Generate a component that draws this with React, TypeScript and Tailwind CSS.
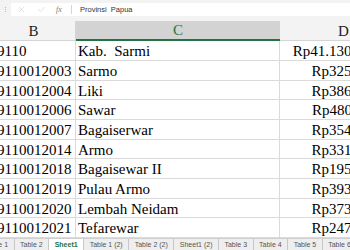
import React from "react";
import { X, Check } from "lucide-react";

const rows: { code: string; name: string; amount: string; h: string }[] = [
  { code: "9110", name: "Kab.  Sarmi", amount: "Rp41.130.512.000", h: "h-[20px]" },
  { code: "9110012003", name: "Sarmo", amount: "Rp325.416.000", h: "h-[20px]" },
  { code: "9110012004", name: "Liki", amount: "Rp386.204.000", h: "h-[19px]" },
  { code: "9110012006", name: "Sawar", amount: "Rp480.118.000", h: "h-[20px]" },
  { code: "9110012007", name: "Bagaiserwar", amount: "Rp354.902.000", h: "h-[20px]" },
  { code: "9110012014", name: "Armo", amount: "Rp331.057.000", h: "h-[19px]" },
  { code: "9110012018", name: "Bagaisewar II", amount: "Rp195.640.000", h: "h-[20px]" },
  { code: "9110012019", name: "Pulau Armo", amount: "Rp393.281.000", h: "h-[20px]" },
  { code: "9110012020", name: "Lembah Neidam", amount: "Rp373.765.000", h: "h-[19px]" },
  { code: "9110012021", name: "Tefarewar", amount: "Rp247.330.000", h: "h-[20px]" },
];

const tabs = [
  "Table 1",
  "Table 2",
  "Sheet1",
  "Table 1 (2)",
  "Table 2 (2)",
  "Sheet1 (2)",
  "Table 3",
  "Table 4",
  "Table 5",
  "Table 6",
];

const serif = { fontFamily: '"Liberation Serif", "Times New Roman", serif' };

export default function App() {
  return (
    <div
      className="relative w-[350px] h-[250px] overflow-hidden bg-white flex flex-col"
      style={{ fontFamily: '"Liberation Sans", Arial, sans-serif' }}
    >
      {/* formula bar */}
      <div className="h-[21px] shrink-0 bg-[#f3f3f3] flex items-start pt-[3px]">
        <div className="w-[11px] h-[13px] flex flex-col items-center justify-center gap-[1px]">
          <span className="w-[1px] h-[1px] bg-[#bbbbbb]" />
          <span className="w-[1px] h-[1px] bg-[#bbbbbb]" />
          <span className="w-[1px] h-[1px] bg-[#bbbbbb]" />
        </div>
        <div className="flex-1 h-[13px] bg-white flex items-center">
          <div className="w-[60px] flex items-center">
            <X size={9} strokeWidth={1.3} className="text-[#c4c4c4] ml-[6px]" />
            <Check size={9} strokeWidth={1.3} className="text-[#c4c4c4] ml-[11px]" />
            <span
              className="ml-[10px] text-[8px] italic text-[#7a7a7a] leading-none"
              style={serif}
            >
              fx
            </span>
          </div>
          <div className="w-[1px] h-[9px] bg-[#d6d6d6]" />
          <span className="ml-[8px] text-[7.5px] text-[#333333] leading-none whitespace-pre">
            Provinsi  Papua
          </span>
        </div>
      </div>

      {/* column headers */}
      <div className="h-[20px] shrink-0 flex ml-[-8px] bg-[#f3f3f3] text-[15px] text-[#222222]" style={serif}>
        <div className="w-[84px] shrink-0 box-border border-b border-r border-[#d4d4d4] flex items-center justify-center pt-[1px]">
          B
        </div>
        <div className="w-[204px] shrink-0 box-border border-b-2 border-[#217346] bg-[#d3d3d3] flex items-center justify-center text-[#217346] pt-[1px]">
          C
        </div>
        <div className="w-[128px] shrink-0 box-border border-b border-r border-[#d4d4d4] flex items-center justify-center pt-[1px]">
          D
        </div>
      </div>

      {/* data rows */}
      <div className="flex flex-col ml-[-8px] text-[15px] text-black" style={serif}>
        {rows.map((r) => (
          <div key={r.code} className={`${r.h} flex shrink-0`}>
            <div className="w-[84px] shrink-0 box-border border-b border-r border-[#dadada] flex items-center pl-[5px] pt-[2px] whitespace-nowrap overflow-hidden">
              {r.code}
            </div>
            <div className="w-[204px] shrink-0 box-border border-b border-r border-[#dadada] flex items-center pl-[2px] pt-[2px] whitespace-pre overflow-hidden">
              {r.name}
            </div>
            <div className="w-[128px] shrink-0 box-border border-b border-r border-[#dadada] flex items-center justify-end pr-[3px] pt-[2px] whitespace-nowrap">
              {r.amount}
            </div>
          </div>
        ))}
      </div>

      {/* sheet tabs */}
      <div className="flex-1 bg-[#eeeeee] border-t border-[#d0d0d0] flex items-stretch ml-[-20px] text-[7px] text-[#555555] leading-none whitespace-nowrap">
        {tabs.map((t) => (
          <div
            key={t}
            className={
              t === "Sheet1"
                ? "px-[5.5px] flex items-center border-r border-[#c8c8c8] bg-white text-[#217346] font-bold"
                : "px-[5.5px] flex items-center border-r border-[#c8c8c8]"
            }
          >
            {t}
          </div>
        ))}
      </div>
    </div>
  );
}
